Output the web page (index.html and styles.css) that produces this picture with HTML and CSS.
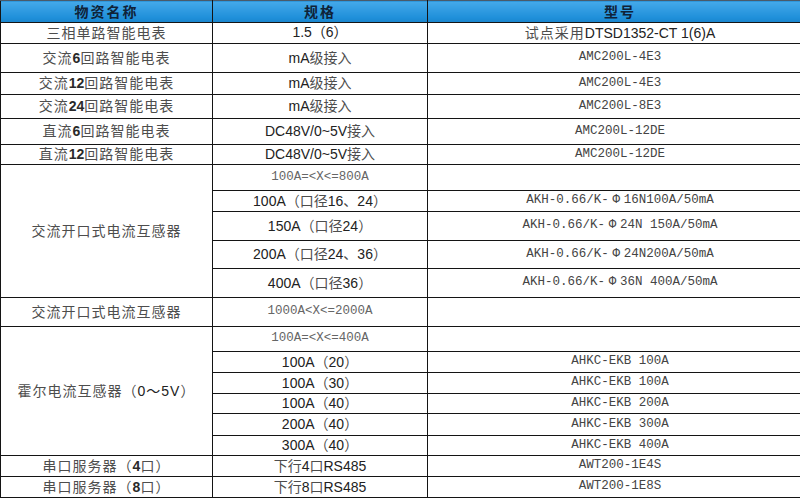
FILE: index.html
```html
<!DOCTYPE html>
<html lang="zh-CN">
<head>
<meta charset="utf-8">
<title>物资清单</title>
<link rel="stylesheet" href="styles.css">
</head>
<body>
<table class="grid">
  <colgroup>
    <col class="c1">
    <col class="c2">
    <col class="c3">
  </colgroup>
  <thead>
    <tr class="h22 head">
      <th>物资名称</th>
      <th>规格</th>
      <th>型号</th>
    </tr>
  </thead>
  <tbody>
    <tr class="h21">
      <td class="name">三相单路智能电表</td>
      <td class="spec">1.5（6）</td>
      <td class="model"><span class="cj">试点采用</span><span class="sans">DTSD1352-CT 1(6)A</span></td>
    </tr>
    <tr class="h29">
      <td class="name">交流<b>6</b>回路智能电表</td>
      <td class="spec">mA<span class="cj">级接入</span></td>
      <td class="mono">AMC200L-4E3</td>
    </tr>
    <tr class="h22">
      <td class="name">交流<b>12</b>回路智能电表</td>
      <td class="spec">mA<span class="cj">级接入</span></td>
      <td class="mono">AMC200L-4E3</td>
    </tr>
    <tr class="h24">
      <td class="name">交流<b>24</b>回路智能电表</td>
      <td class="spec">mA<span class="cj">级接入</span></td>
      <td class="mono">AMC200L-8E3</td>
    </tr>
    <tr class="h26">
      <td class="name">直流<b>6</b>回路智能电表</td>
      <td class="spec">DC48V/0~5V<span class="cj">接入</span></td>
      <td class="mono">AMC200L-12DE</td>
    </tr>
    <tr class="h20">
      <td class="name">直流<b>12</b>回路智能电表</td>
      <td class="spec">DC48V/0~5V<span class="cj">接入</span></td>
      <td class="mono">AMC200L-12DE</td>
    </tr>
    <tr class="h26">
      <td class="name" rowspan="5">交流开口式电流互感器</td>
      <td class="mono light">100A=&lt;X&lt;=800A</td>
      <td class="mono"></td>
    </tr>
    <tr class="h21">
      <td class="spec">100A<span class="cj">（口径</span>16<span class="cj">、</span>24<span class="cj">）</span></td>
      <td class="mono">AKH-0.66/K-<span class="phi">Φ</span>16N100A/50mA</td>
    </tr>
    <tr class="h29">
      <td class="spec">150A<span class="cj">（口径</span>24<span class="cj">）</span></td>
      <td class="mono">AKH-0.66/K-<span class="phi">Φ</span>24N 150A/50mA</td>
    </tr>
    <tr class="h28">
      <td class="spec">200A<span class="cj">（口径</span>24<span class="cj">、</span>36<span class="cj">）</span></td>
      <td class="mono">AKH-0.66/K-<span class="phi">Φ</span>24N200A/50mA</td>
    </tr>
    <tr class="h29">
      <td class="spec">400A<span class="cj">（口径</span>36<span class="cj">）</span></td>
      <td class="mono">AKH-0.66/K-<span class="phi">Φ</span>36N 400A/50mA</td>
    </tr>
    <tr class="h29">
      <td class="name">交流开口式电流互感器</td>
      <td class="mono light">1000A&lt;X&lt;=2000A</td>
      <td class="mono"></td>
    </tr>
    <tr class="h25">
      <td class="name" rowspan="6">霍尔电流互感器（<span class="sans">0～5V</span>）</td>
      <td class="mono light">100A=&lt;X&lt;=400A</td>
      <td class="mono"></td>
    </tr>
    <tr class="h21">
      <td class="spec">100A<span class="cj">（</span>20<span class="cj">）</span></td>
      <td class="mono">AHKC-EKB 100A</td>
    </tr>
    <tr class="h21">
      <td class="spec">100A<span class="cj">（</span>30<span class="cj">）</span></td>
      <td class="mono">AHKC-EKB 100A</td>
    </tr>
    <tr class="h20">
      <td class="spec">100A<span class="cj">（</span>40<span class="cj">）</span></td>
      <td class="mono">AHKC-EKB 200A</td>
    </tr>
    <tr class="h22">
      <td class="spec">200A<span class="cj">（</span>40<span class="cj">）</span></td>
      <td class="mono">AHKC-EKB 300A</td>
    </tr>
    <tr class="h20">
      <td class="spec">300A<span class="cj">（</span>40<span class="cj">）</span></td>
      <td class="mono">AHKC-EKB 400A</td>
    </tr>
    <tr class="h21">
      <td class="name">串口服务器（<b>4</b>口）</td>
      <td class="spec"><span class="cj">下行</span>4<span class="cj">口</span>RS485</td>
      <td class="mono">AWT200-1E4S</td>
    </tr>
    <tr class="h21">
      <td class="name">串口服务器（<b>8</b>口）</td>
      <td class="spec"><span class="cj">下行</span>8<span class="cj">口</span>RS485</td>
      <td class="mono">AWT200-1E8S</td>
    </tr>
  </tbody>
</table>
</body>
</html>
```

FILE: styles.css
```css
html, body {
  margin: 0;
  padding: 0;
  background: #ffffff;
  overflow: hidden;
  width: 800px;
  height: 500px;
}

.grid {
  border-collapse: collapse;
  table-layout: fixed;
  width: 812px;
  font-family: "Noto Sans CJK SC", sans-serif;
  font-size: 14px;
}

.c1 { width: 212px; }
.c2 { width: 215px; }
.c3 { width: 385px; }

.grid th,
.grid td {
  border: 1px solid #141414;
  padding: 0 0 2px 0;
  text-align: center;
  vertical-align: middle;
  line-height: 16px;
  white-space: nowrap;
  overflow: hidden;
}

.h20 { height: 20px; }
.h21 { height: 21px; }
.h22 { height: 22px; }
.h24 { height: 24px; }
.h25 { height: 25px; }
.h26 { height: 26px; }
.h28 { height: 28px; }
.h29 { height: 29px; }

.head th {
  background: linear-gradient(#45a9ea, #1e8fd9 80%, #1a84cc);
  color: #0f2238;
  font-weight: 700;
  font-size: 14px;
  letter-spacing: 2px;
  border-top-color: #4a5a6a;
}

.name {
  color: #4d4d4d;
  letter-spacing: 1px;
}

.name b {
  font-family: "Liberation Sans", sans-serif;
  font-weight: 700;
  color: #2a2a2a;
  letter-spacing: 0;
}

.sans {
  font-family: "Liberation Sans", "Noto Sans CJK SC", sans-serif;
  color: #222222;
}

.spec {
  font-family: "Liberation Sans", "Noto Sans CJK SC", sans-serif;
  color: #222222;
  font-size: 14px;
}

.cj {
  font-family: "Noto Sans CJK SC", sans-serif;
  color: #4d4d4d;
}

.model .cj {
  letter-spacing: 1px;
}

.mono {
  font-family: "Liberation Mono", "Noto Sans CJK SC", monospace;
  font-size: 12.5px;
  color: #444444;
}

.mono.light {
  color: #666666;
}

.phi {
  display: inline-block;
  width: 15px;
  text-align: center;
}
```
